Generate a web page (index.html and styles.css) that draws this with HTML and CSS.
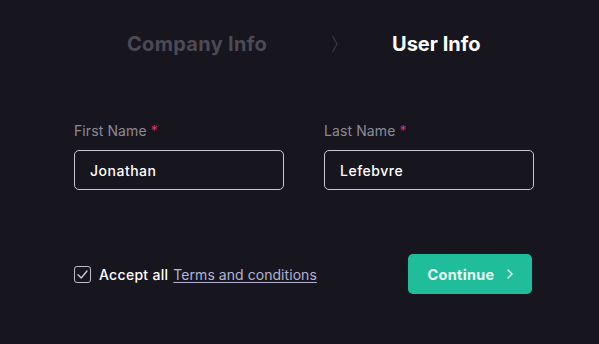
FILE: index.html
```html
<!DOCTYPE html>
<html lang="en">
<head>
<meta charset="utf-8">
<link rel="stylesheet" href="styles.css">
</head>
<body>
<div class="page">
  <nav class="steps">
    <span class="step step-done">Company Info</span>
    <svg class="step-sep" width="8" height="20" viewBox="0 0 8 20"><path d="M1.5 2 L6 10 L1.5 18" fill="none" stroke="#3a3944" stroke-width="1.2"/></svg>
    <span class="step step-active">User Info</span>
  </nav>
  <form class="form">
    <div class="fields">
      <label class="field">
        <span class="label">First Name <span class="req">*</span></span>
        <span class="input">Jonathan</span>
      </label>
      <label class="field">
        <span class="label">Last Name <span class="req">*</span></span>
        <span class="input">Lefebvre</span>
      </label>
    </div>
    <div class="actions">
      <div class="accept">
        <span class="checkbox"><svg width="13" height="13" viewBox="0 0 13 13"><path d="M2 6.8 L5.2 10 L11 3" fill="none" stroke="#c9c8d6" stroke-width="1.4" stroke-linecap="round" stroke-linejoin="round"/></svg></span>
        <span class="accept-text">Accept all</span>
        <a class="terms">Terms and conditions</a>
      </div>
      <button type="button" class="btn">Continue <svg width="8" height="12" viewBox="0 0 8 12"><path d="M2 2 L6 6 L2 10" fill="none" stroke="#e4fbf3" stroke-width="1.4" stroke-linecap="round" stroke-linejoin="round"/></svg></button>
    </div>
  </form>
</div>
</body>
</html>
```
FILE: styles.css
```css
* { box-sizing: border-box; }
html, body { margin: 0; padding: 0; }
body {
  background: #17161f;
  font-family: "Inter", "Open Sans", sans-serif;
  width: 599px;
  height: 344px;
  overflow: hidden;
}
.page {
  padding: 0 65px 0 74px;
}
.steps {
  display: flex;
  align-items: center;
  height: 88px;
  padding-left: 53px;
}
.step {
  font-size: 20px;
  font-weight: 700;
  letter-spacing: 0.3px;
}
.step-done { color: #4b4a55; width: 204px; }
.step-active { color: #ffffff; margin-left: 53px; letter-spacing: 0; }
.step-sep { display: block; }
.form { padding-top: 34px; }
.fields {
  display: flex;
  gap: 40px;
}
.field {
  display: flex;
  flex-direction: column;
  width: 210px;
}
.label {
  font-size: 14px;
  color: #8b8a95;
  height: 18px;
  line-height: 18px;
  margin-bottom: 10px;
  letter-spacing: 0.1px;
}
.req { color: #d8336f; }
.input {
  height: 40px;
  border: 1px solid #c9c8d2;
  border-radius: 5px;
  padding: 0 15px;
  display: flex;
  align-items: center;
  color: #ffffff;
  font-size: 14px;
  font-weight: 500;
  letter-spacing: 0.5px;
}
.actions {
  display: flex;
  align-items: center;
  justify-content: space-between;
  margin-top: 64px;
  width: 458px;
}
.accept {
  display: flex;
  align-items: center;
  font-size: 14px;
}
.checkbox {
  width: 17px;
  height: 17px;
  border: 1.3px solid #bdbccb;
  border-radius: 3px;
  display: flex;
  align-items: center;
  justify-content: center;
  margin-right: 8px;
}
.accept-text { color: #ffffff; font-weight: 500; margin-right: 5px; letter-spacing: 0.3px; }
.terms { color: #b5b2d4; text-decoration: underline; text-underline-offset: 2px; letter-spacing: 0.05px; }
.btn {
  width: 124px;
  height: 40px;
  border: 0;
  border-radius: 5px;
  background: #20bd9a;
  color: #e8fcf5;
  font-family: inherit;
  font-size: 14.5px;
  font-weight: 700;
  letter-spacing: 0.3px;
  display: flex;
  align-items: center;
  justify-content: center;
  gap: 12px;
  padding: 0 0 0 2px;
}
```
